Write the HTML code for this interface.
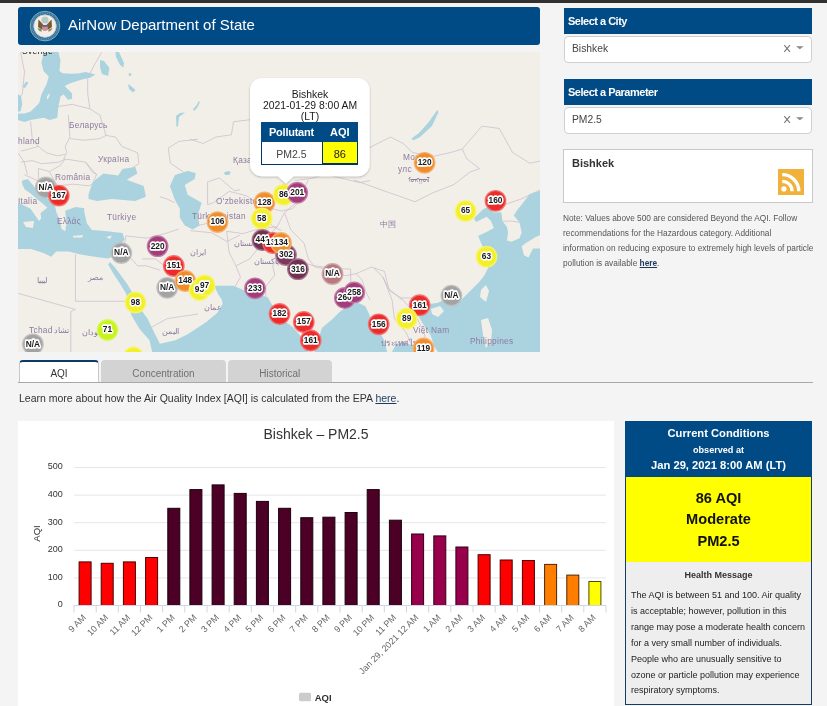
<!DOCTYPE html>
<html><head><meta charset="utf-8"><style>
*{box-sizing:border-box;margin:0;padding:0}
html,body{width:827px;height:706px;overflow:hidden;background:#f4f4f4;font-family:"Liberation Sans", sans-serif;color:#333}
.abs{position:absolute;will-change:transform}
.t{white-space:nowrap}
svg text{font-family:"Liberation Sans", sans-serif}
body{-webkit-font-smoothing:antialiased}
.nolcd{will-change:transform}
</style></head><body>
<div class="abs" style="left:0;top:0;width:827px;height:3px;background:#333030"></div>
<div class="abs" style="left:18px;top:7px;width:522px;height:38px;background:#004b86;border-radius:3px"></div>
<div class="abs" style="left:67.5px;top:15px;font-size:15px;line-height:20px;color:#fff;white-space:nowrap">AirNow Department of State</div>
<svg class="abs" style="left:29px;top:10px" width="32" height="32" viewBox="29 10 32 32"><circle cx="45" cy="26.1" r="14.8" fill="#35689e" stroke="#7fb8a8" stroke-width="1"/><circle cx="45" cy="26.1" r="13" fill="none" stroke="#6a9cc0" stroke-width="1.2" stroke-dasharray="1 0.8"/><circle cx="45" cy="26.1" r="11.3" fill="#f3efe8" stroke="#a8d0c8" stroke-width="0.8"/><circle cx="45" cy="20" r="3.6" fill="#b9c9c2"/><path d="M38.5 19.5 L44 25.5 L42.5 30 L38 27 Z" fill="#7a5a32"/><path d="M51.5 19.5 L46 25.5 L47.5 30 L52 27 Z" fill="#7a5a32"/><path d="M42.2 25 H47.8 V29.5 Q45 32.5 42.2 29.5 Z" fill="#d98c8c"/><rect x="42.2" y="25" width="5.6" height="1.8" fill="#4866a8"/><path d="M37.5 28 Q39 32 42 31.5 L41 29 Z" fill="#5e9a5a"/><path d="M52.5 28 Q51 32 48 31.5 L49 29 Z" fill="#a08a60"/></svg>
<svg class="nolcd" style="position:absolute;left:18px;top:52px" width="522" height="300" viewBox="18 52 522 300"><rect x="18" y="52" width="522" height="300" fill="#f2efe9"/><polyline points="20.2,50.0 24.5,71.8 22.4,93.5 18.0,100.1" fill="none" stroke="#c9b9c9" stroke-width="0.7"/><polyline points="102.9,50.0 94.2,65.2 87.7,78.3 87.7,93.5 89.8,108.8 99.8,115.0 106.0,135.4" fill="none" stroke="#c9b9c9" stroke-width="0.7"/><polyline points="57.2,106.6 72.4,104.4 89.8,108.8" fill="none" stroke="#c9b9c9" stroke-width="0.7"/><polyline points="30.6,121.3 32.2,138.6 38.4,146.4" fill="none" stroke="#c9b9c9" stroke-width="0.7"/><polyline points="68.3,115.0 69.9,137.0 65.2,146.4 66.7,152.7 63.6,159.0" fill="none" stroke="#c9b9c9" stroke-width="0.7"/><polyline points="69.9,138.6 84.0,140.2 99.8,138.6 106.0,135.4" fill="none" stroke="#c9b9c9" stroke-width="0.7"/><polyline points="106.0,135.4 115.5,137.0 121.8,146.4 137.5,152.7 139.0,163.7 131.2,168.5" fill="none" stroke="#c9b9c9" stroke-width="0.7"/><polyline points="21.1,151.2 38.4,146.4 46.3,152.7 57.3,155.9 65.2,154.3" fill="none" stroke="#c9b9c9" stroke-width="0.7"/><polyline points="21.1,162.2 32.2,160.6 41.6,163.7 58.9,162.2 65.2,159.0" fill="none" stroke="#c9b9c9" stroke-width="0.7"/><polyline points="38.4,168.5 49.4,171.6 60.5,165.3 65.2,159.0" fill="none" stroke="#c9b9c9" stroke-width="0.7"/><polyline points="65.2,159.0 85.6,162.2 96.6,174.7 93.5,181.0" fill="none" stroke="#c9b9c9" stroke-width="0.7"/><polyline points="85.6,162.2 91.9,171.6 96.6,174.7" fill="none" stroke="#c9b9c9" stroke-width="0.7"/><polyline points="57.3,185.8 73.0,184.2 88.8,185.8 95.0,182.6" fill="none" stroke="#c9b9c9" stroke-width="0.7"/><polyline points="24.3,174.7 38.4,181.0 57.3,184.2" fill="none" stroke="#c9b9c9" stroke-width="0.7"/><polyline points="38.4,168.5 38.4,181.0" fill="none" stroke="#c9b9c9" stroke-width="0.7"/><polyline points="49.4,171.6 57.3,185.8 58.0,195.0 62.0,205.0" fill="none" stroke="#c9b9c9" stroke-width="0.7"/><polyline points="18.0,152.7 24.3,162.2 27.4,174.7" fill="none" stroke="#c9b9c9" stroke-width="0.7"/><polyline points="168.2,148.0 179.1,141.4 198.0,139.2" fill="none" stroke="#c9b9c9" stroke-width="0.7"/><polyline points="168.2,148.0 170.4,163.2 183.4,171.9" fill="none" stroke="#c9b9c9" stroke-width="0.7"/><polyline points="190.0,139.2 203.1,143.5 216.1,137.0 231.4,134.8 233.5,121.8 250.9,119.6" fill="none" stroke="#c9b9c9" stroke-width="0.7"/><polyline points="207.6,181.9 207.6,204.7 213.5,202.7 229.2,191.4 246.6,195.8 255.3,202.3" fill="none" stroke="#c9b9c9" stroke-width="0.7"/><polyline points="294.5,180.5 311.9,178.4 325.0,174.0 342.4,178.4 359.8,182.7 370.0,180.5" fill="none" stroke="#c9b9c9" stroke-width="0.7"/><polyline points="305.4,195.8 292.3,208.8 281.4,211.0 272.7,208.8 261.8,213.2 272.7,226.3 281.4,230.6" fill="none" stroke="#c9b9c9" stroke-width="0.7"/><polyline points="190.0,230.6 211.8,232.8 227.0,241.5 240.1,235.0" fill="none" stroke="#c9b9c9" stroke-width="0.7"/><polyline points="207.6,181.9 219.5,177.9 234.3,190.8 240.0,189.8" fill="none" stroke="#c9b9c9" stroke-width="0.7"/><polyline points="160.0,196.8 167.0,199.0 174.9,202.7" fill="none" stroke="#c9b9c9" stroke-width="0.7"/><polyline points="197.7,225.5 206.6,223.5" fill="none" stroke="#c9b9c9" stroke-width="0.7"/><polyline points="75.4,254.3 75.4,301.3 128.2,301.3" fill="none" stroke="#c9b9c9" stroke-width="0.7"/><polyline points="18.0,293.3 75.4,309.4 70.8,311.7 70.8,352.1" fill="none" stroke="#c9b9c9" stroke-width="0.7"/><polyline points="125.9,235.9 146.6,238.2 164.9,233.6 178.7,229.0" fill="none" stroke="#c9b9c9" stroke-width="0.7"/><polyline points="125.9,235.9 123.6,249.7 137.4,265.8 146.6,265.8 160.3,270.3" fill="none" stroke="#c9b9c9" stroke-width="0.7"/><polyline points="142.0,258.9 155.7,258.9 178.7,277.2 192.5,286.4" fill="none" stroke="#c9b9c9" stroke-width="0.7"/><polyline points="146.6,330.0 167.2,318.6 198.0,314.0" fill="none" stroke="#c9b9c9" stroke-width="0.7"/><polyline points="226.7,231.3 229.0,252.0 235.9,265.8 240.5,277.2 233.6,288.7" fill="none" stroke="#c9b9c9" stroke-width="0.7"/><polyline points="235.9,265.8 249.7,258.9 258.9,247.4 268.0,235.9 277.2,226.7" fill="none" stroke="#c9b9c9" stroke-width="0.7"/><polyline points="226.7,231.3 242.8,233.6 258.9,229.0 277.2,226.7 284.4,212.7" fill="none" stroke="#c9b9c9" stroke-width="0.7"/><polyline points="277.2,240.5 281.8,254.3 272.6,265.8 274.9,275.0 265.8,286.4 265.8,297.9" fill="none" stroke="#c9b9c9" stroke-width="0.7"/><polyline points="308.3,180.0 297.4,201.8 284.4,212.7 290.9,230.0 304.0,243.1 308.3,258.4 314.8,267.1 327.9,269.2 345.3,275.8 356.2,273.6 371.4,267.1 384.5,271.4 388.8,288.8 401.9,300.0" fill="none" stroke="#c9b9c9" stroke-width="0.7"/><polyline points="297.9,261.2 314.0,265.8 332.3,268.0 350.7,269.2" fill="none" stroke="#c9b9c9" stroke-width="0.7"/><polyline points="350.7,269.2 350.7,281.8 359.9,286.4 364.5,297.9" fill="none" stroke="#c9b9c9" stroke-width="0.7"/><polyline points="356.2,273.6 362.0,280.0 366.0,292.0 370.0,300.0" fill="none" stroke="#c9b9c9" stroke-width="0.7"/><polyline points="368.7,148.0 390.5,137.1 403.5,143.6 412.2,152.3 431.8,156.7 451.4,152.3 462.3,149.0 481.9,126.2 499.3,128.4 512.4,152.3 529.8,163.2 540.0,161.0" fill="none" stroke="#c9b9c9" stroke-width="0.7"/><polyline points="462.3,149.0 466.7,158.8 479.7,168.6 470.0,172.0" fill="none" stroke="#c9b9c9" stroke-width="0.7"/><polyline points="354.0,180.0 378.0,188.7 401.3,196.9 415.0,201.8 432.4,193.0 454.1,184.4 470.0,172.0" fill="none" stroke="#c9b9c9" stroke-width="0.7"/><polyline points="373.8,268.0 383.0,277.2 389.8,291.0 401.3,297.9 417.4,297.9 428.9,304.8" fill="none" stroke="#c9b9c9" stroke-width="0.7"/><polyline points="383.0,277.2 392.1,300.2 394.4,318.6 405.9,332.3 415.1,352.0" fill="none" stroke="#c9b9c9" stroke-width="0.7"/><polyline points="401.3,297.9 415.0,314.0 424.0,332.0 428.0,352.0" fill="none" stroke="#c9b9c9" stroke-width="0.7"/><polyline points="495.4,210.7 506.9,203.8 520.7,199.2 540.0,190.0" fill="none" stroke="#c9b9c9" stroke-width="0.7"/><polyline points="502.5,221.3 511.5,221.0 519.5,222.4" fill="none" stroke="#c9b9c9" stroke-width="0.7"/><polygon points="43.5,54.1 49.8,52.0 58.3,52.0 60.5,60.5 59.4,71.1 62.6,73.2 70.0,73.8 78.0,73.5 85.7,72.0 95.4,74.4 90.6,77.4 80.9,79.8 69.0,83.8 64.7,86.0 67.9,89.2 72.1,93.4 72.1,98.7 67.9,99.8 63.6,94.5 60.5,96.6 58.3,107.2 57.3,117.8 49.8,120.0 43.5,117.8 30.7,120.0 24.4,122.1 18.0,120.0 18.0,113.6 24.4,113.6 30.7,111.4 39.2,103.0 41.4,94.5 46.7,83.8 48.8,76.4 43.5,71.1 41.4,62.6" fill="#aad3df" /><polygon points="18.0,94.5 21.0,96.0 22.2,104.0 20.5,111.4 18.0,111.4" fill="#aad3df" /><polygon points="22.2,87.0 26.0,81.7 28.6,82.5 25.0,88.1" fill="#aad3df" /><polygon points="100.0,60.0 104.0,61.0 109.5,68.0 108.0,76.0 102.0,74.0 100.0,67.0" fill="#aad3df" /><polygon points="115.5,52.0 119.0,52.0 124.0,63.0 123.5,67.5 120.0,65.0 116.0,57.0" fill="#aad3df" /><polygon points="128.0,84.0 131.0,86.0 135.5,90.0 133.0,92.5 129.0,89.0" fill="#aad3df" /><polygon points="129.0,73.0 131.5,73.5 131.0,76.0 128.5,75.5" fill="#aad3df" /><polygon points="176.0,116.0 180.0,113.0 185.0,112.5 179.0,117.0 178.0,126.0 176.5,127.0" fill="#aad3df" /><polygon points="193.0,109.0 196.0,106.0 199.0,101.0 200.0,102.0 197.0,108.0 194.0,111.0" fill="#aad3df" /><polygon points="88.5,194.6 92.7,181.9 103.4,173.4 118.2,175.5 122.5,169.1 135.2,167.0 137.4,173.4 126.7,179.7 143.7,186.1 145.9,196.7 135.2,201.0 111.9,198.9 97.0,201.0 88.5,198.9" fill="#aad3df" /><polygon points="169.9,185.9 174.9,175.0 187.7,171.0 195.7,173.0 194.7,178.9 184.8,184.9 187.7,194.8 194.7,198.7 201.6,202.7 199.6,209.6 197.7,214.6 199.6,225.5 192.7,229.5 184.8,225.5 179.8,217.6 179.8,208.7 174.9,199.7" fill="#aad3df" /><polygon points="21.9,180.8 27.7,178.9 32.0,184.0 36.4,189.5 42.0,194.0 48.6,199.3 55.0,205.7 56.3,212.0 60.1,221.0 61.4,228.7 65.2,231.2 66.5,223.6 65.2,210.8 75.4,207.0 84.3,208.3 84.3,212.0 86.9,223.6 92.0,230.0 107.3,231.2 118.0,232.5 122.5,232.9 124.6,239.2 120.4,245.6 114.0,256.2 107.6,258.4 94.5,256.7 79.2,254.2 69.0,251.6 56.3,251.6 51.2,256.7 43.5,252.9 30.8,249.1 18.0,249.1 18.0,203.5 20.9,204.0 30.6,208.8 37.3,218.5 39.0,221.0 41.2,218.5 40.5,213.0 46.0,208.8 47.3,207.5 43.1,204.0 37.3,199.2 30.0,193.0 24.8,189.5 22.5,185.0" fill="#aad3df" /><polygon points="108.2,264.6 113.0,272.9 119.2,282.5 126.1,293.5 131.6,315.4 139.8,329.2 149.5,340.2 152.2,352.0 161.0,352.0 159.5,342.9 154.0,331.9 147.3,318.2 139.1,307.2 133.4,294.8 128.0,285.2 121.0,275.6 115.0,267.4 110.0,262.0" fill="#aad3df" /><polygon points="174.0,270.0 185.0,276.0 200.0,282.0 212.0,284.0 214.0,290.0 206.0,294.0 193.0,290.0 181.0,282.0" fill="#aad3df" /><polygon points="152.2,352.0 157.7,344.3 175.5,340.2 188.1,334.0 206.3,322.1 217.2,313.0 222.6,304.0 222.0,300.0 218.0,294.0 214.2,285.8 222.0,285.8 233.5,285.8 246.2,291.3 260.7,294.9 268.0,297.6 271.6,304.0 278.8,316.7 293.3,327.6 304.2,340.3 307.9,352.0" fill="#aad3df" /><polygon points="314.5,352.0 321.8,328.0 332.6,319.0 339.9,311.7 347.2,306.3 358.0,302.7 365.3,306.3 368.9,313.5 372.6,322.6 379.8,331.7 385.3,342.6 387.0,352.0" fill="#aad3df" /><polygon points="392.0,352.0 396.0,344.0 404.0,342.0 414.0,346.0 416.0,352.0" fill="#aad3df" /><polygon points="540.0,190.7 529.7,194.1 522.9,203.1 517.2,210.0 513.8,215.6 519.5,222.4 521.7,232.6 519.5,238.3 511.5,241.7 507.0,240.6 508.1,232.6 507.0,227.0 502.5,221.3 501.3,212.2 493.8,212.5 488.2,206.8 482.5,209.7 474.0,218.2 476.0,222.0 486.7,216.7 491.0,221.0 493.8,228.0 486.0,232.3 478.2,236.0 482.5,246.5 486.7,255.0 488.2,268.0 484.0,276.0 479.4,281.8 470.2,291.0 461.0,300.0 450.0,297.2 437.9,302.7 427.0,304.5 423.3,306.3 417.9,315.3 423.3,324.4 430.6,335.3 434.2,346.2 437.9,352.0 540.0,352.0" fill="#aad3df" /><polygon points="437.3,109.9 438.5,112.0 432.0,126.0 420.0,137.0 413.0,140.5 411.5,138.5 419.0,133.0 428.0,123.0" fill="#aad3df" /><polygon points="224.0,172.5 228.0,171.0 231.0,172.0 229.0,175.0 225.0,175.0" fill="#aad3df" /><polygon points="46.7,97.0 49.0,93.4 49.8,95.0 47.5,99.8" fill="#f2efe9" /><polygon points="23.0,222.0 34.0,221.0 33.0,228.0 26.0,227.0" fill="#f2efe9" /><polygon points="73.0,236.0 83.0,235.0 82.0,237.5 73.0,237.5" fill="#f2efe9" /><polygon points="106.0,237.0 112.0,235.5 110.0,239.0" fill="#f2efe9" /><polygon points="521.7,246.2 526.3,242.8 535.4,237.2 540.0,234.9 540.0,248.5 533.0,248.5 528.5,257.6 524.0,255.3" fill="#f2efe9" /><polygon points="481.0,290.0 486.0,285.0 489.0,291.0 486.0,302.0 480.0,297.0" fill="#f2efe9" /><polygon points="431.0,309.0 440.0,306.0 444.0,311.0 438.0,317.0 432.0,314.0" fill="#f2efe9" /><polygon points="481.0,320.0 488.0,318.0 492.0,330.0 491.0,342.0 486.0,348.0 483.0,335.0" fill="#f2efe9" /><text x="22" y="53.5" font-size="8.5" fill="#222" letter-spacing="0.3">Sverige</text><text x="69" y="127.5" font-size="8.3" fill="#8e7a9e" letter-spacing="0.3">Беларусь</text><text x="98" y="162" font-size="8.3" fill="#8e7a9e" letter-spacing="0.3">Україна</text><text x="55" y="180" font-size="8.3" fill="#8e7a9e" letter-spacing="0.3">România</text><text x="18" y="144" font-size="8.3" fill="#8e7a9e" letter-spacing="0.3">hland</text><text x="18" y="203.5" font-size="8.3" fill="#8e7a9e" letter-spacing="0.3">Italia</text><text x="57" y="224" font-size="8.3" fill="#8e7a9e" letter-spacing="0.3">Ελλάς</text><text x="107" y="220" font-size="8.3" fill="#8e7a9e" letter-spacing="0.3">Türkiye</text><text x="29" y="333" font-size="8.3" fill="#8e7a9e" letter-spacing="0.3">Tchad</text><text x="54" y="333" font-size="8.3" fill="#8e7a9e" letter-spacing="0.3">تشاد</text><text x="233" y="163" font-size="8.3" fill="#8e7a9e" letter-spacing="0.3">Қаза</text><text x="216" y="204" font-size="8.3" fill="#8e7a9e" letter-spacing="0.3">O'zbekiston</text><text x="192" y="219" font-size="8.3" fill="#8e7a9e" letter-spacing="0.3">Türkmenistan</text><text x="403" y="160" font-size="8.3" fill="#8e7a9e" letter-spacing="0.3">Монгол</text><text x="398" y="171.5" font-size="8.3" fill="#8e7a9e" letter-spacing="0.3">улс</text><text x="408" y="182" font-size="7" fill="#8e7a9e" letter-spacing="0.3">ᠮᠣᠩᠭᠣᠯ</text><text x="380" y="227" font-size="8.3" fill="#8e7a9e" letter-spacing="0.3">中国</text><text x="413" y="333" font-size="8.3" fill="#8e7a9e" letter-spacing="0.3">Việt Nam</text><text x="470" y="344" font-size="8.3" fill="#8e7a9e" letter-spacing="0.3">Philippines</text><text x="381" y="346" font-size="8.3" fill="#8e7a9e" letter-spacing="0.3">ประเทศไทย</text><text x="234" y="246" font-size="8.3" fill="#8e7a9e" letter-spacing="0.3">افغانستان</text><text x="254" y="264" font-size="8.3" fill="#8e7a9e" letter-spacing="0.3">پاکستان</text><text x="190" y="255" font-size="8.3" fill="#8e7a9e" letter-spacing="0.3">ايران</text><text x="88" y="280" font-size="8.3" fill="#8e7a9e" letter-spacing="0.3">مصر</text><text x="37" y="283" font-size="8.3" fill="#8e7a9e" letter-spacing="0.3">ليبيا</text><text x="204" y="310" font-size="8.3" fill="#8e7a9e" letter-spacing="0.3">عمان</text><text x="162" y="334" font-size="8.3" fill="#8e7a9e" letter-spacing="0.3">اليمن</text><text x="82" y="335" font-size="8.3" fill="#8e7a9e" letter-spacing="0.3">سودان</text><circle cx="45.8" cy="187.5" r="10.2" fill="#a3a3a3" stroke="#bfbfbf" stroke-opacity="0.9" stroke-width="1.4"/><circle cx="58.8" cy="195.6" r="10.2" fill="#ec2b2b" stroke="#f26b6b" stroke-opacity="0.9" stroke-width="1.4"/><circle cx="121.3" cy="253.1" r="10.2" fill="#a3a3a3" stroke="#bfbfbf" stroke-opacity="0.9" stroke-width="1.4"/><circle cx="157.6" cy="246.2" r="10.2" fill="#a23c7a" stroke="#be76a2" stroke-opacity="0.9" stroke-width="1.4"/><circle cx="173.8" cy="266" r="10.2" fill="#ec2b2b" stroke="#f26b6b" stroke-opacity="0.9" stroke-width="1.4"/><circle cx="167.2" cy="287.8" r="10.2" fill="#a3a3a3" stroke="#bfbfbf" stroke-opacity="0.9" stroke-width="1.4"/><circle cx="185.3" cy="281" r="10.2" fill="#f08c2a" stroke="#f4ae6a" stroke-opacity="0.9" stroke-width="1.4"/><circle cx="199.5" cy="290" r="10.2" fill="#f3f02a" stroke="#f7f46a" stroke-opacity="0.9" stroke-width="1.4"/><circle cx="204.6" cy="285.5" r="10.2" fill="#f3f02a" stroke="#f7f46a" stroke-opacity="0.9" stroke-width="1.4"/><circle cx="135.5" cy="302.5" r="10.2" fill="#f3f02a" stroke="#f7f46a" stroke-opacity="0.9" stroke-width="1.4"/><circle cx="107.5" cy="330" r="10.2" fill="#c6f41c" stroke="#d7f760" stroke-opacity="0.9" stroke-width="1.4"/><circle cx="32.9" cy="344.3" r="10.2" fill="#a3a3a3" stroke="#bfbfbf" stroke-opacity="0.9" stroke-width="1.4"/><circle cx="133.5" cy="357.5" r="10.2" fill="#f3f02a" stroke="#f7f46a" stroke-opacity="0.9" stroke-width="1.4"/><circle cx="217.5" cy="222.1" r="10.2" fill="#f08c2a" stroke="#f4ae6a" stroke-opacity="0.9" stroke-width="1.4"/><circle cx="264.5" cy="202.5" r="10.2" fill="#f08c2a" stroke="#f4ae6a" stroke-opacity="0.9" stroke-width="1.4"/><circle cx="261.7" cy="218.5" r="10.2" fill="#f3f02a" stroke="#f7f46a" stroke-opacity="0.9" stroke-width="1.4"/><circle cx="283.6" cy="194.9" r="10.2" fill="#f3f02a" stroke="#f7f46a" stroke-opacity="0.9" stroke-width="1.4"/><circle cx="297.2" cy="192.7" r="10.2" fill="#a23c7a" stroke="#be76a2" stroke-opacity="0.9" stroke-width="1.4"/><circle cx="262.5" cy="240" r="10.2" fill="#733152" stroke="#9d6f86" stroke-opacity="0.9" stroke-width="1.4"/><circle cx="286" cy="255" r="10.2" fill="#7d385c" stroke="#a4748d" stroke-opacity="0.9" stroke-width="1.4"/><circle cx="273" cy="243" r="10.2" fill="#ec2b2b" stroke="#f26b6b" stroke-opacity="0.9" stroke-width="1.4"/><circle cx="281" cy="243" r="10.2" fill="#f08c2a" stroke="#f4ae6a" stroke-opacity="0.9" stroke-width="1.4"/><circle cx="297.9" cy="269.2" r="10.2" fill="#733152" stroke="#9d6f86" stroke-opacity="0.9" stroke-width="1.4"/><circle cx="332.5" cy="274" r="10.2" fill="#b67a7e" stroke="#cca2a5" stroke-opacity="0.9" stroke-width="1.4"/><circle cx="255" cy="288.3" r="10.2" fill="#a23c7a" stroke="#be76a2" stroke-opacity="0.9" stroke-width="1.4"/><circle cx="344.8" cy="298" r="10.2" fill="#a23c7a" stroke="#be76a2" stroke-opacity="0.9" stroke-width="1.4"/><circle cx="354.2" cy="292.5" r="10.2" fill="#a23c7a" stroke="#be76a2" stroke-opacity="0.9" stroke-width="1.4"/><circle cx="279.5" cy="314" r="10.2" fill="#ec2b2b" stroke="#f26b6b" stroke-opacity="0.9" stroke-width="1.4"/><circle cx="303.8" cy="322" r="10.2" fill="#ec2b2b" stroke="#f26b6b" stroke-opacity="0.9" stroke-width="1.4"/><circle cx="310.7" cy="340.5" r="10.2" fill="#ec2b2b" stroke="#f26b6b" stroke-opacity="0.9" stroke-width="1.4"/><circle cx="424.6" cy="162.8" r="10.2" fill="#f08c2a" stroke="#f4ae6a" stroke-opacity="0.9" stroke-width="1.4"/><circle cx="495.5" cy="200.8" r="10.2" fill="#ec2b2b" stroke="#f26b6b" stroke-opacity="0.9" stroke-width="1.4"/><circle cx="465.6" cy="211" r="10.2" fill="#f3f02a" stroke="#f7f46a" stroke-opacity="0.9" stroke-width="1.4"/><circle cx="486.5" cy="256.7" r="10.2" fill="#f3f02a" stroke="#f7f46a" stroke-opacity="0.9" stroke-width="1.4"/><circle cx="451.4" cy="295.6" r="10.2" fill="#a3a3a3" stroke="#bfbfbf" stroke-opacity="0.9" stroke-width="1.4"/><circle cx="419.7" cy="305.2" r="10.2" fill="#ec2b2b" stroke="#f26b6b" stroke-opacity="0.9" stroke-width="1.4"/><circle cx="406.7" cy="318.6" r="10.2" fill="#f3f02a" stroke="#f7f46a" stroke-opacity="0.9" stroke-width="1.4"/><circle cx="378.7" cy="324.3" r="10.2" fill="#ec2b2b" stroke="#f26b6b" stroke-opacity="0.9" stroke-width="1.4"/><circle cx="423.5" cy="348.5" r="10.2" fill="#f08c2a" stroke="#f4ae6a" stroke-opacity="0.9" stroke-width="1.4"/><text transform="translate(45.8,189.8) scale(0.87,1)" font-size="9.6" font-weight="bold" text-anchor="middle" fill="#1a1a1a" stroke="#fff" stroke-width="3.4" stroke-linejoin="round" paint-order="stroke">N/A</text><text transform="translate(58.8,197.9) scale(0.87,1)" font-size="9.6" font-weight="bold" text-anchor="middle" fill="#1a1a1a" stroke="#fff" stroke-width="3.4" stroke-linejoin="round" paint-order="stroke">167</text><text transform="translate(121.3,255.4) scale(0.87,1)" font-size="9.6" font-weight="bold" text-anchor="middle" fill="#1a1a1a" stroke="#fff" stroke-width="3.4" stroke-linejoin="round" paint-order="stroke">N/A</text><text transform="translate(157.6,248.5) scale(0.87,1)" font-size="9.6" font-weight="bold" text-anchor="middle" fill="#1a1a1a" stroke="#fff" stroke-width="3.4" stroke-linejoin="round" paint-order="stroke">220</text><text transform="translate(173.8,268.3) scale(0.87,1)" font-size="9.6" font-weight="bold" text-anchor="middle" fill="#1a1a1a" stroke="#fff" stroke-width="3.4" stroke-linejoin="round" paint-order="stroke">151</text><text transform="translate(167.2,290.1) scale(0.87,1)" font-size="9.6" font-weight="bold" text-anchor="middle" fill="#1a1a1a" stroke="#fff" stroke-width="3.4" stroke-linejoin="round" paint-order="stroke">N/A</text><text transform="translate(185.3,283.3) scale(0.87,1)" font-size="9.6" font-weight="bold" text-anchor="middle" fill="#1a1a1a" stroke="#fff" stroke-width="3.4" stroke-linejoin="round" paint-order="stroke">148</text><text transform="translate(199.5,292.3) scale(0.87,1)" font-size="9.6" font-weight="bold" text-anchor="middle" fill="#1a1a1a" stroke="#fff" stroke-width="3.4" stroke-linejoin="round" paint-order="stroke">93</text><text transform="translate(204.6,287.8) scale(0.87,1)" font-size="9.6" font-weight="bold" text-anchor="middle" fill="#1a1a1a" stroke="#fff" stroke-width="3.4" stroke-linejoin="round" paint-order="stroke">97</text><text transform="translate(135.5,304.8) scale(0.87,1)" font-size="9.6" font-weight="bold" text-anchor="middle" fill="#1a1a1a" stroke="#fff" stroke-width="3.4" stroke-linejoin="round" paint-order="stroke">98</text><text transform="translate(107.5,332.3) scale(0.87,1)" font-size="9.6" font-weight="bold" text-anchor="middle" fill="#1a1a1a" stroke="#fff" stroke-width="3.4" stroke-linejoin="round" paint-order="stroke">71</text><text transform="translate(32.9,346.6) scale(0.87,1)" font-size="9.6" font-weight="bold" text-anchor="middle" fill="#1a1a1a" stroke="#fff" stroke-width="3.4" stroke-linejoin="round" paint-order="stroke">N/A</text><text transform="translate(217.5,224.4) scale(0.87,1)" font-size="9.6" font-weight="bold" text-anchor="middle" fill="#1a1a1a" stroke="#fff" stroke-width="3.4" stroke-linejoin="round" paint-order="stroke">106</text><text transform="translate(264.5,204.8) scale(0.87,1)" font-size="9.6" font-weight="bold" text-anchor="middle" fill="#1a1a1a" stroke="#fff" stroke-width="3.4" stroke-linejoin="round" paint-order="stroke">128</text><text transform="translate(261.7,220.8) scale(0.87,1)" font-size="9.6" font-weight="bold" text-anchor="middle" fill="#1a1a1a" stroke="#fff" stroke-width="3.4" stroke-linejoin="round" paint-order="stroke">58</text><text transform="translate(283.6,197.2) scale(0.87,1)" font-size="9.6" font-weight="bold" text-anchor="middle" fill="#1a1a1a" stroke="#fff" stroke-width="3.4" stroke-linejoin="round" paint-order="stroke">86</text><text transform="translate(297.2,195.0) scale(0.87,1)" font-size="9.6" font-weight="bold" text-anchor="middle" fill="#1a1a1a" stroke="#fff" stroke-width="3.4" stroke-linejoin="round" paint-order="stroke">201</text><text transform="translate(262.5,242.3) scale(0.87,1)" font-size="9.6" font-weight="bold" text-anchor="middle" fill="#1a1a1a" stroke="#fff" stroke-width="3.4" stroke-linejoin="round" paint-order="stroke">441</text><text transform="translate(286,257.3) scale(0.87,1)" font-size="9.6" font-weight="bold" text-anchor="middle" fill="#1a1a1a" stroke="#fff" stroke-width="3.4" stroke-linejoin="round" paint-order="stroke">302</text><text transform="translate(273,245.3) scale(0.87,1)" font-size="9.6" font-weight="bold" text-anchor="middle" fill="#1a1a1a" stroke="#fff" stroke-width="3.4" stroke-linejoin="round" paint-order="stroke">134</text><text transform="translate(281,245.3) scale(0.87,1)" font-size="9.6" font-weight="bold" text-anchor="middle" fill="#1a1a1a" stroke="#fff" stroke-width="3.4" stroke-linejoin="round" paint-order="stroke">134</text><text transform="translate(297.9,271.5) scale(0.87,1)" font-size="9.6" font-weight="bold" text-anchor="middle" fill="#1a1a1a" stroke="#fff" stroke-width="3.4" stroke-linejoin="round" paint-order="stroke">316</text><text transform="translate(332.5,276.3) scale(0.87,1)" font-size="9.6" font-weight="bold" text-anchor="middle" fill="#1a1a1a" stroke="#fff" stroke-width="3.4" stroke-linejoin="round" paint-order="stroke">N/A</text><text transform="translate(255,290.6) scale(0.87,1)" font-size="9.6" font-weight="bold" text-anchor="middle" fill="#1a1a1a" stroke="#fff" stroke-width="3.4" stroke-linejoin="round" paint-order="stroke">233</text><text transform="translate(344.8,300.3) scale(0.87,1)" font-size="9.6" font-weight="bold" text-anchor="middle" fill="#1a1a1a" stroke="#fff" stroke-width="3.4" stroke-linejoin="round" paint-order="stroke">260</text><text transform="translate(354.2,294.8) scale(0.87,1)" font-size="9.6" font-weight="bold" text-anchor="middle" fill="#1a1a1a" stroke="#fff" stroke-width="3.4" stroke-linejoin="round" paint-order="stroke">258</text><text transform="translate(279.5,316.3) scale(0.87,1)" font-size="9.6" font-weight="bold" text-anchor="middle" fill="#1a1a1a" stroke="#fff" stroke-width="3.4" stroke-linejoin="round" paint-order="stroke">182</text><text transform="translate(303.8,324.3) scale(0.87,1)" font-size="9.6" font-weight="bold" text-anchor="middle" fill="#1a1a1a" stroke="#fff" stroke-width="3.4" stroke-linejoin="round" paint-order="stroke">157</text><text transform="translate(310.7,342.8) scale(0.87,1)" font-size="9.6" font-weight="bold" text-anchor="middle" fill="#1a1a1a" stroke="#fff" stroke-width="3.4" stroke-linejoin="round" paint-order="stroke">161</text><text transform="translate(424.6,165.1) scale(0.87,1)" font-size="9.6" font-weight="bold" text-anchor="middle" fill="#1a1a1a" stroke="#fff" stroke-width="3.4" stroke-linejoin="round" paint-order="stroke">120</text><text transform="translate(495.5,203.1) scale(0.87,1)" font-size="9.6" font-weight="bold" text-anchor="middle" fill="#1a1a1a" stroke="#fff" stroke-width="3.4" stroke-linejoin="round" paint-order="stroke">160</text><text transform="translate(465.6,213.3) scale(0.87,1)" font-size="9.6" font-weight="bold" text-anchor="middle" fill="#1a1a1a" stroke="#fff" stroke-width="3.4" stroke-linejoin="round" paint-order="stroke">65</text><text transform="translate(486.5,259.0) scale(0.87,1)" font-size="9.6" font-weight="bold" text-anchor="middle" fill="#1a1a1a" stroke="#fff" stroke-width="3.4" stroke-linejoin="round" paint-order="stroke">63</text><text transform="translate(451.4,297.9) scale(0.87,1)" font-size="9.6" font-weight="bold" text-anchor="middle" fill="#1a1a1a" stroke="#fff" stroke-width="3.4" stroke-linejoin="round" paint-order="stroke">N/A</text><text transform="translate(419.7,307.5) scale(0.87,1)" font-size="9.6" font-weight="bold" text-anchor="middle" fill="#1a1a1a" stroke="#fff" stroke-width="3.4" stroke-linejoin="round" paint-order="stroke">161</text><text transform="translate(406.7,320.9) scale(0.87,1)" font-size="9.6" font-weight="bold" text-anchor="middle" fill="#1a1a1a" stroke="#fff" stroke-width="3.4" stroke-linejoin="round" paint-order="stroke">89</text><text transform="translate(378.7,326.6) scale(0.87,1)" font-size="9.6" font-weight="bold" text-anchor="middle" fill="#1a1a1a" stroke="#fff" stroke-width="3.4" stroke-linejoin="round" paint-order="stroke">156</text><text transform="translate(423.5,350.8) scale(0.87,1)" font-size="9.6" font-weight="bold" text-anchor="middle" fill="#1a1a1a" stroke="#fff" stroke-width="3.4" stroke-linejoin="round" paint-order="stroke">119</text></svg>
<svg class="abs" style="left:240px;top:70px" width="140" height="120" viewBox="240 70 140 120"><defs><filter id="sh" x="-10%" y="-10%" width="120%" height="120%"><feDropShadow dx="0" dy="1" stdDeviation="1.2" flood-opacity="0.25"/></filter></defs><path d="M262 78 H357.6 A12 12 0 0 1 369.6 90 V164.3 A12 12 0 0 1 357.6 176.3 H293.8 L285.8 183.6 L277.8 176.3 H262 A12 12 0 0 1 250 164.3 V90 A12 12 0 0 1 262 78 Z" fill="#fff" filter="url(#sh)"/></svg>
<div class="abs t" style="left:250px;top:89px;width:120px;text-align:center;font-size:10.4px;color:#1a1a1a;line-height:11px">Bishkek<br>2021-01-29 8:00 AM<br>(LT)</div>
<div class="abs" style="left:261.2px;top:121.9px;width:96.5px;height:42.6px;border:1px solid #003366;background:#fff"></div>
<div class="abs" style="left:261.2px;top:121.9px;width:96.5px;height:20.3px;background:#004b86"></div>
<div class="abs" style="left:322.1px;top:142.2px;width:35.6px;height:22.3px;background:#ffff00;border-left:1px solid #003366;border-right:1px solid #003366;border-bottom:1px solid #003366"></div>
<div class="abs t" style="left:261.4px;top:126.3px;width:60.9px;text-align:center;font-size:11px;font-weight:bold;color:#fff;line-height:12px;letter-spacing:-0.25px">Pollutant</div>
<div class="abs t" style="left:322.1px;top:126.3px;width:35.6px;text-align:center;font-size:11px;font-weight:bold;color:#fff;line-height:12px">AQI</div>
<div class="abs t" style="left:261.4px;top:147.6px;width:60.9px;text-align:center;font-size:10.5px;color:#444;line-height:12px">PM2.5</div>
<div class="abs t" style="left:322.1px;top:147.6px;width:35.6px;text-align:center;font-size:11px;color:#222;line-height:12px">86</div>
<svg class="nolcd" style="position:absolute;left:18px;top:421px" width="596" height="285" viewBox="18 421 596 285"><rect x="18" y="421" width="596" height="285" fill="#fff"/><text x="316" y="439" font-size="14" fill="#333" text-anchor="middle">Bishkek – PM2.5</text><line x1="74.0" x2="606.0" y1="577.9" y2="577.9" stroke="#e6e6e6" stroke-width="1"/><line x1="74.0" x2="606.0" y1="550.3" y2="550.3" stroke="#e6e6e6" stroke-width="1"/><line x1="74.0" x2="606.0" y1="522.7" y2="522.7" stroke="#e6e6e6" stroke-width="1"/><line x1="74.0" x2="606.0" y1="495.1" y2="495.1" stroke="#e6e6e6" stroke-width="1"/><line x1="74.0" x2="606.0" y1="467.5" y2="467.5" stroke="#e6e6e6" stroke-width="1"/><text x="62.7" y="607.3" font-size="9" fill="#333" text-anchor="end">0</text><text x="62.7" y="579.7" font-size="9" fill="#333" text-anchor="end">100</text><text x="62.7" y="552.1" font-size="9" fill="#333" text-anchor="end">200</text><text x="62.7" y="524.5" font-size="9" fill="#333" text-anchor="end">300</text><text x="62.7" y="496.9" font-size="9" fill="#333" text-anchor="end">400</text><text x="62.7" y="469.3" font-size="9" fill="#333" text-anchor="end">500</text><text transform="translate(40,533.5) rotate(-90)" font-size="9.6" fill="#333" text-anchor="middle">AQI</text><rect x="79.1" y="561.9" width="12" height="43.6" fill="#ff0000" stroke="#4d0000" stroke-width="1"/><rect x="101.2" y="563.3" width="12" height="42.2" fill="#ff0000" stroke="#4d0000" stroke-width="1"/><rect x="123.4" y="561.9" width="12" height="43.6" fill="#ff0000" stroke="#4d0000" stroke-width="1"/><rect x="145.6" y="557.5" width="12" height="48.0" fill="#ff0000" stroke="#4d0000" stroke-width="1"/><rect x="167.8" y="508.3" width="12" height="97.2" fill="#4c0026" stroke="#1a000d" stroke-width="1"/><rect x="189.9" y="489.6" width="12" height="115.9" fill="#4c0026" stroke="#1a000d" stroke-width="1"/><rect x="212.1" y="484.9" width="12" height="120.6" fill="#4c0026" stroke="#1a000d" stroke-width="1"/><rect x="234.2" y="493.4" width="12" height="112.1" fill="#4c0026" stroke="#1a000d" stroke-width="1"/><rect x="256.4" y="501.4" width="12" height="104.1" fill="#4c0026" stroke="#1a000d" stroke-width="1"/><rect x="278.6" y="508.3" width="12" height="97.2" fill="#4c0026" stroke="#1a000d" stroke-width="1"/><rect x="300.8" y="517.7" width="12" height="87.8" fill="#4c0026" stroke="#1a000d" stroke-width="1"/><rect x="322.9" y="517.2" width="12" height="88.3" fill="#4c0026" stroke="#1a000d" stroke-width="1"/><rect x="345.1" y="512.5" width="12" height="93.0" fill="#4c0026" stroke="#1a000d" stroke-width="1"/><rect x="367.2" y="489.6" width="12" height="115.9" fill="#4c0026" stroke="#1a000d" stroke-width="1"/><rect x="389.4" y="520.2" width="12" height="85.3" fill="#4c0026" stroke="#1a000d" stroke-width="1"/><rect x="411.6" y="534.0" width="12" height="71.5" fill="#99004c" stroke="#2e0017" stroke-width="1"/><rect x="433.8" y="535.9" width="12" height="69.6" fill="#99004c" stroke="#2e0017" stroke-width="1"/><rect x="455.9" y="547.0" width="12" height="58.5" fill="#99004c" stroke="#2e0017" stroke-width="1"/><rect x="478.1" y="554.7" width="12" height="50.8" fill="#ff0000" stroke="#4d0000" stroke-width="1"/><rect x="500.2" y="560.0" width="12" height="45.5" fill="#ff0000" stroke="#4d0000" stroke-width="1"/><rect x="522.4" y="560.5" width="12" height="45.0" fill="#ff0000" stroke="#4d0000" stroke-width="1"/><rect x="544.6" y="564.4" width="12" height="41.1" fill="#ff7e00" stroke="#4d2600" stroke-width="1"/><rect x="566.8" y="575.1" width="12" height="30.4" fill="#ff7e00" stroke="#4d2600" stroke-width="1"/><rect x="588.9" y="581.5" width="12" height="24.0" fill="#ffff00" stroke="#4d4d00" stroke-width="1"/><line x1="74.0" x2="606.0" y1="605.5" y2="605.5" stroke="#ccd6eb" stroke-width="1"/><line x1="74.0" x2="74.0" y1="605.5" y2="612.5" stroke="#ccd6eb" stroke-width="1"/><line x1="96.2" x2="96.2" y1="605.5" y2="612.5" stroke="#ccd6eb" stroke-width="1"/><line x1="118.3" x2="118.3" y1="605.5" y2="612.5" stroke="#ccd6eb" stroke-width="1"/><line x1="140.5" x2="140.5" y1="605.5" y2="612.5" stroke="#ccd6eb" stroke-width="1"/><line x1="162.7" x2="162.7" y1="605.5" y2="612.5" stroke="#ccd6eb" stroke-width="1"/><line x1="184.8" x2="184.8" y1="605.5" y2="612.5" stroke="#ccd6eb" stroke-width="1"/><line x1="207.0" x2="207.0" y1="605.5" y2="612.5" stroke="#ccd6eb" stroke-width="1"/><line x1="229.2" x2="229.2" y1="605.5" y2="612.5" stroke="#ccd6eb" stroke-width="1"/><line x1="251.3" x2="251.3" y1="605.5" y2="612.5" stroke="#ccd6eb" stroke-width="1"/><line x1="273.5" x2="273.5" y1="605.5" y2="612.5" stroke="#ccd6eb" stroke-width="1"/><line x1="295.7" x2="295.7" y1="605.5" y2="612.5" stroke="#ccd6eb" stroke-width="1"/><line x1="317.8" x2="317.8" y1="605.5" y2="612.5" stroke="#ccd6eb" stroke-width="1"/><line x1="340.0" x2="340.0" y1="605.5" y2="612.5" stroke="#ccd6eb" stroke-width="1"/><line x1="362.2" x2="362.2" y1="605.5" y2="612.5" stroke="#ccd6eb" stroke-width="1"/><line x1="384.3" x2="384.3" y1="605.5" y2="612.5" stroke="#ccd6eb" stroke-width="1"/><line x1="406.5" x2="406.5" y1="605.5" y2="612.5" stroke="#ccd6eb" stroke-width="1"/><line x1="428.7" x2="428.7" y1="605.5" y2="612.5" stroke="#ccd6eb" stroke-width="1"/><line x1="450.8" x2="450.8" y1="605.5" y2="612.5" stroke="#ccd6eb" stroke-width="1"/><line x1="473.0" x2="473.0" y1="605.5" y2="612.5" stroke="#ccd6eb" stroke-width="1"/><line x1="495.2" x2="495.2" y1="605.5" y2="612.5" stroke="#ccd6eb" stroke-width="1"/><line x1="517.3" x2="517.3" y1="605.5" y2="612.5" stroke="#ccd6eb" stroke-width="1"/><line x1="539.5" x2="539.5" y1="605.5" y2="612.5" stroke="#ccd6eb" stroke-width="1"/><line x1="561.7" x2="561.7" y1="605.5" y2="612.5" stroke="#ccd6eb" stroke-width="1"/><line x1="583.8" x2="583.8" y1="605.5" y2="612.5" stroke="#ccd6eb" stroke-width="1"/><line x1="606.0" x2="606.0" y1="605.5" y2="612.5" stroke="#ccd6eb" stroke-width="1"/><text transform="translate(86.6,618.2) rotate(-45)" font-size="9" fill="#666" text-anchor="end">9 AM</text><text transform="translate(108.8,618.2) rotate(-45)" font-size="9" fill="#666" text-anchor="end">10 AM</text><text transform="translate(130.9,618.2) rotate(-45)" font-size="9" fill="#666" text-anchor="end">11 AM</text><text transform="translate(153.1,618.2) rotate(-45)" font-size="9" fill="#666" text-anchor="end">12 PM</text><text transform="translate(175.2,618.2) rotate(-45)" font-size="9" fill="#666" text-anchor="end">1 PM</text><text transform="translate(197.4,618.2) rotate(-45)" font-size="9" fill="#666" text-anchor="end">2 PM</text><text transform="translate(219.6,618.2) rotate(-45)" font-size="9" fill="#666" text-anchor="end">3 PM</text><text transform="translate(241.8,618.2) rotate(-45)" font-size="9" fill="#666" text-anchor="end">4 PM</text><text transform="translate(263.9,618.2) rotate(-45)" font-size="9" fill="#666" text-anchor="end">5 PM</text><text transform="translate(286.1,618.2) rotate(-45)" font-size="9" fill="#666" text-anchor="end">6 PM</text><text transform="translate(308.2,618.2) rotate(-45)" font-size="9" fill="#666" text-anchor="end">7 PM</text><text transform="translate(330.4,618.2) rotate(-45)" font-size="9" fill="#666" text-anchor="end">8 PM</text><text transform="translate(352.6,618.2) rotate(-45)" font-size="9" fill="#666" text-anchor="end">9 PM</text><text transform="translate(374.8,618.2) rotate(-45)" font-size="9" fill="#666" text-anchor="end">10 PM</text><text transform="translate(396.9,618.2) rotate(-45)" font-size="9" fill="#666" text-anchor="end">11 PM</text><text transform="translate(419.1,618.2) rotate(-45)" font-size="9" fill="#666" text-anchor="end">Jan 29, 2021 12 AM</text><text transform="translate(441.2,618.2) rotate(-45)" font-size="9" fill="#666" text-anchor="end">1 AM</text><text transform="translate(463.4,618.2) rotate(-45)" font-size="9" fill="#666" text-anchor="end">2 AM</text><text transform="translate(485.6,618.2) rotate(-45)" font-size="9" fill="#666" text-anchor="end">3 AM</text><text transform="translate(507.8,618.2) rotate(-45)" font-size="9" fill="#666" text-anchor="end">4 AM</text><text transform="translate(529.9,618.2) rotate(-45)" font-size="9" fill="#666" text-anchor="end">5 AM</text><text transform="translate(552.1,618.2) rotate(-45)" font-size="9" fill="#666" text-anchor="end">6 AM</text><text transform="translate(574.2,618.2) rotate(-45)" font-size="9" fill="#666" text-anchor="end">7 AM</text><text transform="translate(596.4,618.2) rotate(-45)" font-size="9" fill="#666" text-anchor="end">8 AM</text><rect x="299" y="692.8" width="12" height="8.4" rx="1.5" fill="#ccc"/><text x="314.7" y="700.7" font-size="9.5" font-weight="bold" fill="#333">AQI</text></svg>
<div class="abs" style="left:564px;top:8px;width:248px;height:26px;background:#004b86"></div>
<div class="abs t" style="left:568px;top:13.6px;font-size:11px;font-weight:bold;letter-spacing:-0.5px;color:#fff;line-height:14px">Select a City</div>
<div class="abs" style="left:563.5px;top:35.5px;width:248px;height:27px;background:#fff;border:1px solid #cfcfcf;border-radius:4px"></div>
<div class="abs t" style="left:571.6px;top:42.5px;font-size:10.3px;color:#444;line-height:12px">Bishkek</div>
<svg class="abs" style="left:780px;top:35.5px" width="30" height="27"><path d="M4.3 9.2 L9.9 15.8 M9.9 9.2 L4.3 15.8" stroke="#777" stroke-width="1.1"/><path d="M16 10.2 L23.7 10.2 L19.85 13.2 Z" fill="#888"/></svg>
<div class="abs" style="left:564px;top:79px;width:248px;height:26px;background:#004b86"></div>
<div class="abs t" style="left:568px;top:84.6px;font-size:11px;font-weight:bold;letter-spacing:-0.5px;color:#fff;line-height:14px">Select a Parameter</div>
<div class="abs" style="left:563.5px;top:106.5px;width:248px;height:27px;background:#fff;border:1px solid #cfcfcf;border-radius:4px"></div>
<div class="abs t" style="left:571.6px;top:113.5px;font-size:10.3px;color:#444;line-height:12px">PM2.5</div>
<svg class="abs" style="left:780px;top:106.5px" width="30" height="27"><path d="M4.3 9.2 L9.9 15.8 M9.9 9.2 L4.3 15.8" stroke="#777" stroke-width="1.1"/><path d="M16 10.2 L23.7 10.2 L19.85 13.2 Z" fill="#888"/></svg>
<div class="abs" style="left:563px;top:149px;width:250px;height:54px;background:#fff;border:1px solid #c8c8c8"></div>
<div class="abs t" style="left:571.5px;top:157px;font-size:11px;font-weight:bold;color:#333;line-height:13px">Bishkek</div>
<svg class="abs" style="left:778px;top:169px" width="26" height="26" viewBox="0 0 26 26"><rect width="26" height="26" fill="#f0b23a"/><circle cx="5.9" cy="19.9" r="2.6" fill="#fff"/><path d="M4.2 12.3 A9.9 9.9 0 0 1 14.1 22.2" stroke="#fff" stroke-width="3.3" fill="none"/><path d="M4.2 5.6 A16.6 16.6 0 0 1 20.8 22.2" stroke="#fff" stroke-width="3.4" fill="none"/></svg>
<div class="abs t" style="left:562.5px;top:211px;width:250px;font-size:8.3px;color:#555;line-height:15.1px">Note: Values above 500 are considered Beyond the AQI. Follow<br>recommendations for the Hazardous category. Additional<br>information on reducing exposure to extremely high levels of particle<br>pollution is available <b style="text-decoration:underline;color:#1e3a5c">here</b>.</div>
<div class="abs" style="left:18.5px;top:360px;width:80px;height:22.5px;background:#fff;border:1px solid #c8c8c8;border-top:2px solid #0b3a6a;border-bottom:none;border-radius:4px 4px 0 0"></div>
<div class="abs t" style="left:18.5px;top:368px;width:80px;text-align:center;font-size:10px;color:#333;line-height:12px">AQI</div>
<div class="abs" style="left:101px;top:359.5px;width:125px;height:22.5px;background:#d3d3d3;border-radius:4px 4px 0 0"></div>
<div class="abs t" style="left:101px;top:368px;width:125px;text-align:center;font-size:10px;color:#707070;line-height:12px">Concentration</div>
<div class="abs" style="left:228px;top:359.5px;width:103.5px;height:22.5px;background:#d3d3d3;border-radius:4px 4px 0 0"></div>
<div class="abs t" style="left:228px;top:368px;width:103.5px;text-align:center;font-size:10px;color:#707070;line-height:12px">Historical</div>
<div class="abs" style="left:18px;top:382px;width:795px;height:1px;background:#a8a8a8"></div>
<div class="abs t" style="left:19px;top:391.7px;font-size:10.5px;color:#333;line-height:13px;white-space:nowrap">Learn more about how the Air Quality Index [AQI] is calculated from the EPA <span style="text-decoration:underline;color:#1e3a5c">here</span>.</div>
<div class="abs" style="left:625px;top:421px;width:187px;height:283.5px;background:#eee;border:1px solid #173d66"></div>
<div class="abs" style="left:625px;top:421px;width:187px;height:56px;background:#004b86"></div>
<div class="abs" style="left:626px;top:477px;width:185px;height:85px;background:#ffff00"></div>
<div class="abs t" style="left:625px;top:427px;width:187px;text-align:center;font-size:11.2px;font-weight:bold;color:#fff;line-height:13px">Current Conditions</div>
<div class="abs t" style="left:625px;top:445px;width:187px;text-align:center;font-size:9.1px;font-weight:bold;color:#fff;line-height:11px">observed at</div>
<div class="abs t" style="left:625px;top:458.5px;width:187px;text-align:center;font-size:11.2px;font-weight:bold;color:#fff;line-height:13px">Jan 29, 2021 8:00 AM (LT)</div>
<div class="abs t" style="left:625px;top:488.3px;width:187px;text-align:center;font-size:14.6px;font-weight:bold;color:#111;line-height:21.4px">86 AQI<br>Moderate<br>PM2.5</div>
<div class="abs t" style="left:625px;top:569.8px;width:187px;text-align:center;font-size:9px;font-weight:bold;color:#333;line-height:11px">Health Message</div>
<div class="abs t" style="left:630.5px;top:587.5px;width:180px;font-size:9px;color:#222;line-height:15.9px">The AQI is between 51 and 100. Air quality<br>is acceptable; however, pollution in this<br>range may pose a moderate health concern<br>for a very small number of individuals.<br>People who are unusually sensitive to<br>ozone or particle pollution may experience<br>respiratory symptoms.</div>
</body></html>
